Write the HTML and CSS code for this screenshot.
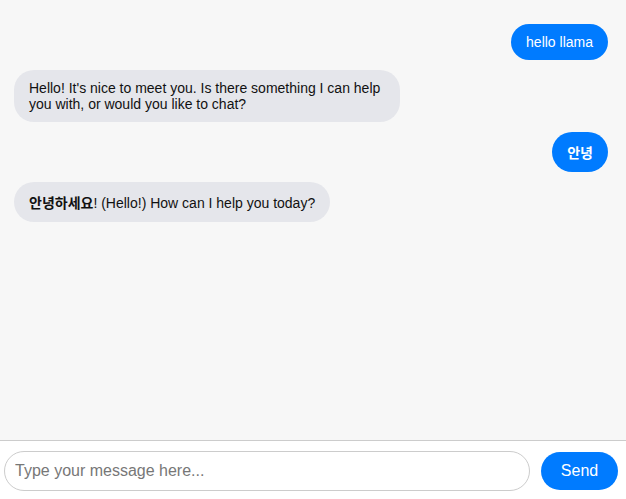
FILE: index.html
```html
<!DOCTYPE html>
<html>
<head>
<meta charset="utf-8">
<link rel="stylesheet" href="styles.css">
</head>
<body>
<div class="app">
  <div class="messages">
    <div class="msg user">hello llama</div>
    <div class="msg bot">Hello! It's nice to meet you. Is there something I can help you with, or would you like to chat?</div>
    <div class="msg user"><span class="ko">안녕</span></div>
    <div class="msg bot"><span class="ko">안녕하세요</span>! (Hello!) How can I help you today?</div>
  </div>
  <div class="composer">
    <input class="input" type="text" placeholder="Type your message here...">
    <button class="send">Send</button>
  </div>
</div>
</body>
</html>
```

FILE: styles.css
```css
html, body {
  margin: 0;
  padding: 0;
  height: 100%;
}
body {
  font-family: "Liberation Sans", Arial, "Noto Sans CJK KR", sans-serif;
  font-size: 14px;
  background: #f7f7f7;
}
.app {
  display: flex;
  flex-direction: column;
  height: 100vh;
}
.messages {
  flex: 1;
  display: flex;
  flex-direction: column;
  gap: 10px;
  padding: 24px 18px 0 14px;
  overflow: hidden;
}
.msg {
  max-width: 65%;
  padding: 10px 15px;
  border-radius: 20px;
  line-height: normal;
  box-sizing: border-box;
}
.ko {
  font-family: "Noto Sans CJK KR", sans-serif;
  font-weight: 700;
}
.user {
  align-self: flex-end;
  background: #007bff;
  color: #fff;
}
.bot {
  align-self: flex-start;
  background: #e5e6eb;
  color: #111;
}
.composer {
  display: flex;
  align-items: center;
  gap: 11px;
  padding: 10px 8px 8px 4px;
  background: #fff;
  border-top: 1px solid #ccc;
}
.input {
  flex: 1;
  height: 40px;
  box-sizing: border-box;
  border: 1px solid #ccc;
  border-radius: 20px;
  padding: 0 10px;
  font-family: "Liberation Sans", Arial, sans-serif;
  font-size: 16px;
  outline: none;
}
.input::placeholder {
  color: #777;
}
.send {
  width: 77px;
  height: 38px;
  border: none;
  border-radius: 19px;
  background: #007bff;
  color: #fff;
  font-family: "Liberation Sans", Arial, sans-serif;
  font-size: 16px;
  padding: 0;
}
```
